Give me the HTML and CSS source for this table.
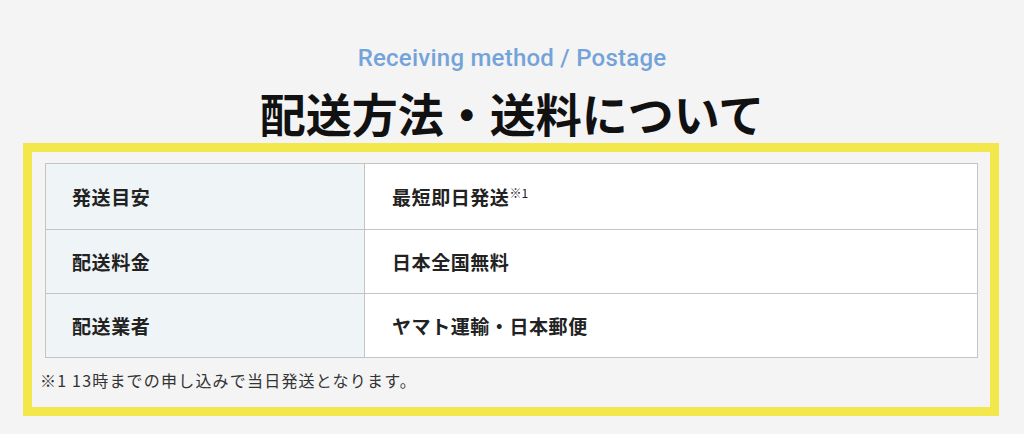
FILE: index.html
```html
<!DOCTYPE html>
<html lang="ja">
<head>
    <meta charset="UTF-8">
    <meta name="viewport" content="width=device-width, initial-scale=1.0">
    <title>配送方法・送料について</title>
    <link rel="stylesheet" href="styles.css">
</head>
<body>

<section class="shipping">
    <p class="shipping-sub">Receiving method / Postage</p>
    <h2 class="shipping-title">配送方法・送料について</h2>

    <div class="shipping-box">
        <table class="shipping-table">
            <tr class="row-first">
                <th>発送目安</th>
                <td>最短即日発送<sup>※1</sup></td>
            </tr>
            <tr>
                <th>配送料金</th>
                <td>日本全国無料</td>
            </tr>
            <tr>
                <th>配送業者</th>
                <td>ヤマト運輸・日本郵便</td>
            </tr>
        </table>
        <p class="shipping-note">※1 13時までの申し込みで当日発送となります。</p>
    </div>
</section>

</body>
</html>
```

FILE: styles.css
```css
body {
    font-family: "Noto Sans CJK JP", "Noto Sans", sans-serif;
    background-color: #f4f4f4;
    color: #222;
    margin: 0;
}
.shipping {
    padding-top: 44px;
}
.shipping-sub {
    margin: 0;
    text-align: center;
    font-family: Roboto, "Noto Sans", sans-serif;
    font-weight: 500;
    font-size: 24px;
    line-height: 28px;
    letter-spacing: 0.01em;
    color: #74a3d9;
}
.shipping-title {
    margin: 10px 0 0;
    text-align: center;
    font-size: 46px;
    line-height: 61px;
    font-weight: 700;
    color: #111;
}
.shipping-box {
    width: 976px;
    margin-left: 23px;
    box-sizing: border-box;
    border: 9px solid #f2e84b;
    padding: 11px 12px 14px 13px;
}
.shipping-table {
    width: 100%;
    border-collapse: collapse;
    border: 1px solid #c4c4c4;
    font-size: 19px;
    line-height: 27px;
    letter-spacing: 0.03em;
}
.shipping-table th,
.shipping-table td {
    border: 1px solid #c4c4c4;
    padding: 18px 26px;
    text-align: left;
    font-weight: 700;
    color: #222;
}
.shipping-table .row-first th,
.shipping-table .row-first td {
    padding-top: 19px;
    padding-bottom: 19px;
}
.shipping-table th {
    width: 266px;
    background-color: #eff4f7;
}
.shipping-table td {
    background-color: #fff;
    padding-left: 27px;
}
.shipping-table sup {
    font-size: 12px;
    line-height: 0;
    font-weight: 400;
    letter-spacing: 0;
}
.shipping-note {
    margin: 10px 0 0 -5px;
    font-size: 16px;
    line-height: 25px;
    letter-spacing: 0.075em;
    color: #333;
}
```
